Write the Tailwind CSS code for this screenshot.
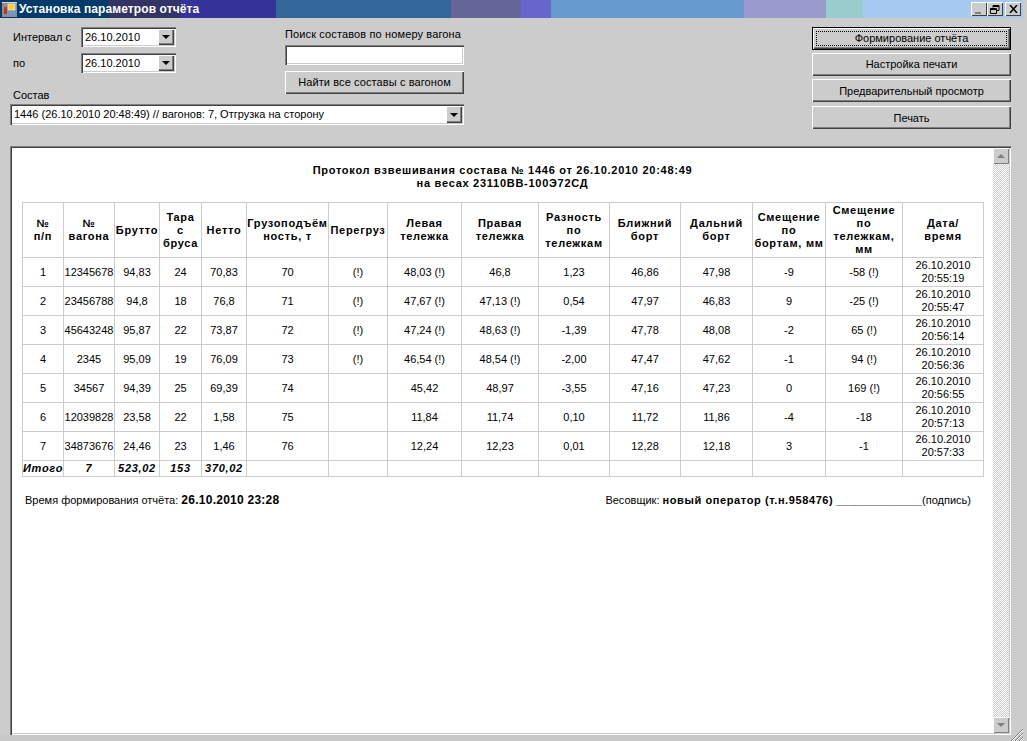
<!doctype html>
<html lang="ru"><head><meta charset="utf-8"><script src="https://cdn.jsdelivr.net/npm/@tailwindcss/browser@4"></script></head>
<body class="bg-[#cccccc]">
<div class="w-[1023px] h-[741px] bg-[#cccccc] flex flex-col overflow-hidden font-['Liberation_Sans',Arial,sans-serif] text-[11px] leading-[13px] text-black">
  <!-- title bar -->
  <div class="relative h-[18px] flex shrink-0">
    <div class="w-[109px] bg-[#003a6b]"></div><div class="w-[72px] bg-[#333366]"></div><div class="w-[95px] bg-[#333399]"></div><div class="w-[175px] bg-[#336699]"></div><div class="w-[70px] bg-[#666699]"></div><div class="w-[30px] bg-[#6666cc]"></div><div class="w-[193px] bg-[#6699cc]"></div><div class="w-[82px] bg-[#9999cc]"></div><div class="w-[37px] bg-[#99cccc]"></div><div class="flex-1 bg-[#a6caf0]"></div>
    <div class="absolute inset-0 flex items-center pl-[2px] pr-[2px]">
      <svg width="15" height="15" viewBox="0 0 15 15" class="mr-[2px]"><rect width="15" height="15" fill="#8a8f98"/><rect x="0" y="0" width="15" height="1" fill="#d8d8d8"/><rect x="6" y="2" width="7" height="6" fill="#ffcc33" stroke="#fff" stroke-width="0.5"/><rect x="2" y="5" width="3" height="7" fill="#cc3322"/><rect x="7" y="10" width="6" height="3" fill="#5f9fe8"/></svg>
      <span class="text-white font-bold text-[12px] tracking-[0.1px]">Установка параметров отчёта</span>
      <div class="ml-auto flex items-center">
        <div class="w-[16px] h-[14px] bg-[#cccccc] shadow-[inset_1px_1px_0_#fff,inset_-1px_-1px_0_#404040] flex items-end justify-start pl-[4px] pb-[2px]"><div class="w-[6px] h-[2px] bg-[#808080]"></div></div>
        <div class="w-[16px] h-[14px] bg-[#cccccc] shadow-[inset_1px_1px_0_#fff,inset_-1px_-1px_0_#404040] flex items-center justify-center"><svg width="10" height="9" viewBox="0 0 10 9" fill="none" stroke="#000"><path d="M3 2.5V.5h6v5H7M3 1.5h6"/><path d="M.5 3.5h6v5h-6zM.5 4.5h6"/></svg></div>
        <div class="ml-[2px] w-[16px] h-[14px] bg-[#cccccc] shadow-[inset_1px_1px_0_#fff,inset_-1px_-1px_0_#404040] flex items-center justify-center"><svg width="9" height="8" viewBox="0 0 9 8" fill="none" stroke="#000" stroke-width="1.5"><path d="M1 0l7 8M8 0L1 8"/></svg></div>
      </div>
    </div>
  </div>
  <!-- controls -->
  <div class="h-[128px] shrink-0 flex justify-between pl-[10px] pr-[12px] pt-[9px]">
    <div class="w-[454px] flex flex-col">
      <div class="flex justify-between h-[67px]">
        <div class="pl-[3px] flex flex-col gap-[6px] w-[166px]">
          <div class="flex items-center justify-between">
            <span class="pt-[1px]">Интервал с</span>
            <div class="w-[95px] h-[20px] bg-white shadow-[inset_1px_1px_0_#808080,inset_2px_2px_0_#404040,inset_-1px_-1px_0_#fff,inset_-2px_-2px_0_#ccc] flex items-center justify-between pl-[4px] pr-[2px]"><span>26.10.2010</span>
              <div class="w-[16px] h-[16px] bg-[#cccccc] shadow-[inset_1px_1px_0_#fff,inset_-1px_-1px_0_#404040,inset_-2px_-2px_0_#808080] flex items-center justify-center"><div class="w-0 h-0 border-x-[4px] border-x-transparent border-t-[4px] border-t-black"></div></div></div>
          </div>
          <div class="flex items-center justify-between">
            <span class="pt-[1px]">по</span>
            <div class="w-[95px] h-[20px] bg-white shadow-[inset_1px_1px_0_#808080,inset_2px_2px_0_#404040,inset_-1px_-1px_0_#fff,inset_-2px_-2px_0_#ccc] flex items-center justify-between pl-[4px] pr-[2px]"><span>26.10.2010</span>
              <div class="w-[16px] h-[16px] bg-[#cccccc] shadow-[inset_1px_1px_0_#fff,inset_-1px_-1px_0_#404040,inset_-2px_-2px_0_#808080] flex items-center justify-center"><div class="w-0 h-0 border-x-[4px] border-x-transparent border-t-[4px] border-t-black"></div></div></div>
          </div>
        </div>
        <div class="w-[179px] flex flex-col">
          <div class="h-[18px] pt-[1px] whitespace-nowrap tracking-[0.13px]">Поиск составов по номеру вагона</div>
          <div class="h-[20px] bg-white shadow-[inset_1px_1px_0_#808080,inset_2px_2px_0_#404040,inset_-1px_-1px_0_#fff,inset_-2px_-2px_0_#ccc]"></div>
          <div class="mt-[6px] h-[23px] bg-[#cccccc] shadow-[inset_1px_1px_0_#fff,inset_-1px_-1px_0_#404040,inset_-2px_-2px_0_#808080] flex items-center justify-center tracking-[0.1px]">Найти все составы с вагоном</div>
        </div>
      </div>
      <div class="pl-[3px] h-[15px] -mt-[6px] pt-[1px]">Состав</div>
      <div class="mt-[1px] h-[21px] bg-white shadow-[inset_1px_1px_0_#808080,inset_2px_2px_0_#404040,inset_-1px_-1px_0_#fff,inset_-2px_-2px_0_#ccc] flex items-center justify-between pl-[4px] pr-[2px]"><span>1446 (26.10.2010 20:48:49) // вагонов: 7, Отгрузка на сторону</span>
        <div class="w-[16px] h-[17px] bg-[#cccccc] shadow-[inset_1px_1px_0_#fff,inset_-1px_-1px_0_#404040,inset_-2px_-2px_0_#808080] flex items-center justify-center"><div class="w-0 h-0 border-x-[4px] border-x-transparent border-t-[4px] border-t-black"></div></div></div>
    </div>
    <div class="w-[199px] flex flex-col gap-[3px]">
      <div class="h-[23px] border border-black bg-[#cccccc] shadow-[inset_1px_1px_0_#fff,inset_-1px_-1px_0_#404040,inset_-2px_-2px_0_#808080] p-[3px]"><div class="h-full border border-dotted border-black flex items-center justify-center">Формирование отчёта</div></div>
      <div class="h-[23px] bg-[#cccccc] shadow-[inset_1px_1px_0_#fff,inset_-1px_-1px_0_#404040,inset_-2px_-2px_0_#808080] flex items-center justify-center">Настройка печати</div>
      <div class="h-[23px] pt-[1px] bg-[#cccccc] shadow-[inset_1px_1px_0_#fff,inset_-1px_-1px_0_#404040,inset_-2px_-2px_0_#808080] flex items-center justify-center">Предварительный просмотр</div>
      <div class="mt-[1px] h-[23px] pt-[1px] bg-[#cccccc] shadow-[inset_1px_1px_0_#fff,inset_-1px_-1px_0_#404040,inset_-2px_-2px_0_#808080] flex items-center justify-center">Печать</div>
    </div>
  </div>
  <!-- report panel -->
  <div class="ml-[10px] mr-[12px] h-[589px] shrink-0 flex bg-white shadow-[inset_1px_1px_0_#808080,inset_2px_2px_0_#404040,inset_-1px_-1px_0_#fff,inset_-2px_-2px_0_#ccc] pt-[2px] pl-[2px] pr-[2px] pb-[2px]">
    <div class="flex-1 min-w-0 pl-[10px] pr-[10px] pt-[16px]">
      <div class="text-center font-bold text-[11px] leading-[13px] tracking-[0.73px]">Протокол взвешивания состава № 1446 от 26.10.2010 20:48:49<br>на весах 23110ВВ-100Э72СД</div>
      <table class="table-fixed border-collapse mt-[12px] w-[961px] text-center text-[11px] leading-[13px] [&_td]:border [&_td]:border-[#cccccc] [&_th]:border [&_th]:border-[#cccccc] [&_th]:font-bold [&_th]:tracking-[0.7px] [&_td]:p-0 [&_th]:p-0">
        <colgroup><col class="w-[41px]"><col class="w-[51px]"><col class="w-[45px]"><col class="w-[42px]"><col class="w-[45px]"><col class="w-[82px]"><col class="w-[59px]"><col class="w-[74px]"><col class="w-[77px]"><col class="w-[71px]"><col class="w-[71px]"><col class="w-[72px]"><col class="w-[73px]"><col class="w-[77px]"><col class="w-[81px]"></colgroup>
        <tr class="h-[55px]"><th>№<br>п/п</th><th>№<br>вагона</th><th class="tracking-[0.3px]">Брутто</th><th>Тара<br>с<br>бруса</th><th>Нетто</th><th>Грузоподъём<br>ность, т</th><th>Перегруз</th><th>Левая<br>тележка</th><th>Правая<br>тележка</th><th>Разность<br>по<br>тележкам</th><th>Ближний<br>борт</th><th>Дальний<br>борт</th><th>Смещение<br>по<br>бортам, мм</th><th>Смещение<br>по<br>тележкам,<br>мм</th><th>Дата/<br>время</th></tr>
        <tr class="h-[29px]"><td>1</td><td>12345678</td><td>94,83</td><td>24</td><td>70,83</td><td>70</td><td>(!)</td><td>48,03 (!)</td><td>46,8</td><td>1,23</td><td>46,86</td><td>47,98</td><td>-9</td><td>-58 (!)</td><td>26.10.2010<br>20:55:19</td></tr>
        <tr class="h-[29px]"><td>2</td><td>23456788</td><td>94,8</td><td>18</td><td>76,8</td><td>71</td><td>(!)</td><td>47,67 (!)</td><td>47,13 (!)</td><td>0,54</td><td>47,97</td><td>46,83</td><td>9</td><td>-25 (!)</td><td>26.10.2010<br>20:55:47</td></tr>
        <tr class="h-[29px]"><td>3</td><td>45643248</td><td>95,87</td><td>22</td><td>73,87</td><td>72</td><td>(!)</td><td>47,24 (!)</td><td>48,63 (!)</td><td>-1,39</td><td>47,78</td><td>48,08</td><td>-2</td><td>65 (!)</td><td>26.10.2010<br>20:56:14</td></tr>
        <tr class="h-[29px]"><td>4</td><td>2345</td><td>95,09</td><td>19</td><td>76,09</td><td>73</td><td>(!)</td><td>46,54 (!)</td><td>48,54 (!)</td><td>-2,00</td><td>47,47</td><td>47,62</td><td>-1</td><td>94 (!)</td><td>26.10.2010<br>20:56:36</td></tr>
        <tr class="h-[29px]"><td>5</td><td>34567</td><td>94,39</td><td>25</td><td>69,39</td><td>74</td><td></td><td>45,42</td><td>48,97</td><td>-3,55</td><td>47,16</td><td>47,23</td><td>0</td><td>169 (!)</td><td>26.10.2010<br>20:56:55</td></tr>
        <tr class="h-[29px]"><td>6</td><td>12039828</td><td>23,58</td><td>22</td><td>1,58</td><td>75</td><td></td><td>11,84</td><td>11,74</td><td>0,10</td><td>11,72</td><td>11,86</td><td>-4</td><td>-18</td><td>26.10.2010<br>20:57:13</td></tr>
        <tr class="h-[29px]"><td>7</td><td>34873676</td><td>24,46</td><td>23</td><td>1,46</td><td>76</td><td></td><td>12,24</td><td>12,23</td><td>0,01</td><td>12,28</td><td>12,18</td><td>3</td><td>-1</td><td>26.10.2010<br>20:57:33</td></tr>
        <tr class="h-[16px] font-bold italic tracking-[0.7px]"><td>Итого</td><td>7</td><td>523,02</td><td>153</td><td>370,02</td><td></td><td></td><td></td><td></td><td></td><td></td><td></td><td></td><td></td><td></td></tr>
      </table>
      <div class="mt-[17px] flex justify-between pl-[3px] pr-[12px] w-[961px]">
        <span>Время формирования отчёта: <b class="text-[12px] tracking-[0.25px]">26.10.2010 23:28</b></span>
        <span>Весовщик: <b class="tracking-[0.6px]">новый оператор (т.н.958476)</b> <b>______________</b>(подпись)</span>
      </div>
    </div>
    <!-- scrollbar -->
    <div class="w-[16px] flex flex-col shrink-0 bg-[repeating-conic-gradient(#fff_0_25%,#ccc_0_50%)] bg-[length:2px_2px]">
      <div class="h-[16px] bg-[#cccccc] shadow-[inset_1px_1px_0_#fff,inset_-1px_-1px_0_#808080] flex items-center justify-center"><div class="w-0 h-0 border-x-[4px] border-x-transparent border-b-[4px] border-b-[#808080]"></div></div>
      <div class="flex-1"></div>
      <div class="h-[16px] bg-[#cccccc] shadow-[inset_1px_1px_0_#fff,inset_-1px_-1px_0_#808080] flex items-center justify-center"><div class="w-0 h-0 border-x-[4px] border-x-transparent border-t-[4px] border-t-[#808080]"></div></div>
    </div>
  </div>
  <!-- bottom strip with grip -->
  <div class="relative flex-1 bg-[#c8c8c8]">
    <svg class="absolute right-0 bottom-0" width="13" height="13" viewBox="0 0 13 13" stroke="#808080" fill="none"><path d="M1 13L13 1M5 13L13 5M9 13L13 9"/><path stroke="#fff" d="M2 13L13 2M6 13L13 6M10 13L13 10"/></svg>
  </div>
</div>
</body></html>
